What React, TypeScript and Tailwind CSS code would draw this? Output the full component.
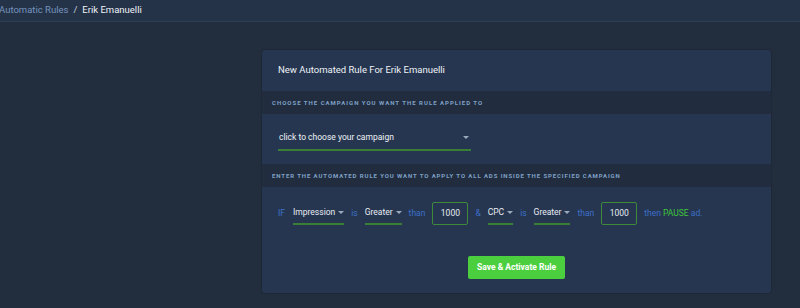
import React from "react";

const Caret = () => (
  <span className="ml-[3px] inline-block h-0 w-0 border-x-[3px] border-t-[3.5px] border-x-transparent border-t-[#9aa9bc]" />
);

function Dropdown({ label }: { label: string }) {
  return (
    <div className="flex h-[23px] items-center border-b-2 border-[#3a7f36]">
      <span className="text-[8.5px] text-[#e6ebf2]">{label}</span>
      <Caret />
    </div>
  );
}

function Word({ children, green }: { children: React.ReactNode; green?: boolean }) {
  return <span className={green ? "text-[#3fc43a]" : "text-[#3d6fc9]"}>{children}</span>;
}

function NumBox({ value }: { value: string }) {
  return (
    <div className="flex h-[23px] w-[36px] items-center justify-center rounded-[2px] border border-[#3f8a3a] text-[8.5px] text-[#e6ebf2]">
      {value}
    </div>
  );
}

export default function App() {
  return (
    <div
      className="h-[308px] w-[800px] overflow-hidden bg-[#222d3d]"
      style={{ fontFamily: "Roboto, 'Liberation Sans', sans-serif" }}
    >
      <div className="flex h-[22px] items-center border-b border-[#2f3e54] bg-[#253349] pb-[1px] text-[9.5px]">
        <span className="-ml-[1px] text-[#7594bc]">Automatic Rules</span>
        <span className="mx-[5px] text-[#c6d0dc]">/</span>
        <span className="text-[#eef2f7]">Erik Emanuelli</span>
      </div>

      <div className="ml-[262px] mt-[28px] w-[509px] overflow-hidden rounded-[3px] bg-[#263650] shadow-[0_0_2px_rgba(0,0,0,0.35)]">
        <div className="flex h-[41px] items-center px-[16px] text-[9.5px] text-[#eef2f7]">
          New Automated Rule For Erik Emanuelli
        </div>

        <div className="flex h-[23px] items-center bg-[#212d3e] px-[10px] text-[6px] font-bold uppercase tracking-[1px] text-[#7fa0c6]">
          Choose the campaign you want the rule applied to
        </div>

        <div className="flex h-[50px] items-center px-[16px]">
          <div className="flex h-[24px] w-[193px] items-center justify-between border-b-2 border-[#3a7f36] pb-[1px] pl-[1px] pr-[2px]">
            <span className="text-[8.5px] text-[#eef2f7]">click to choose your campaign</span>
            <Caret />
          </div>
        </div>

        <div className="flex h-[23px] items-center bg-[#212d3e] px-[10px] text-[6px] font-bold uppercase tracking-[0.9px] text-[#7fa0c6]">
          Enter the automated rule you want to apply to all ads inside the specified campaign
        </div>

        <div className="flex items-center gap-[7px] px-[16px] pt-[15px] text-[8.5px]">
          <span className="mr-[1px]">
            <Word>IF</Word>
          </span>
          <Dropdown label="Impression" />
          <Word>is</Word>
          <Dropdown label="Greater" />
          <Word>than</Word>
          <NumBox value="1000" />
          <Word>&amp;</Word>
          <Dropdown label="CPC" />
          <Word>is</Word>
          <Dropdown label="Greater" />
          <Word>than</Word>
          <NumBox value="1000" />
          <span className="whitespace-nowrap">
            <Word>then</Word> <Word green>PAUSE</Word> <Word>ad.</Word>
          </span>
        </div>

        <div className="flex justify-center pb-[14px] pt-[31px]">
          <button className="h-[23px] w-[97px] rounded-[2px] bg-[#4ccf3e] text-[8.5px] font-bold text-white">
            Save &amp; Activate Rule
          </button>
        </div>
      </div>
    </div>
  );
}
